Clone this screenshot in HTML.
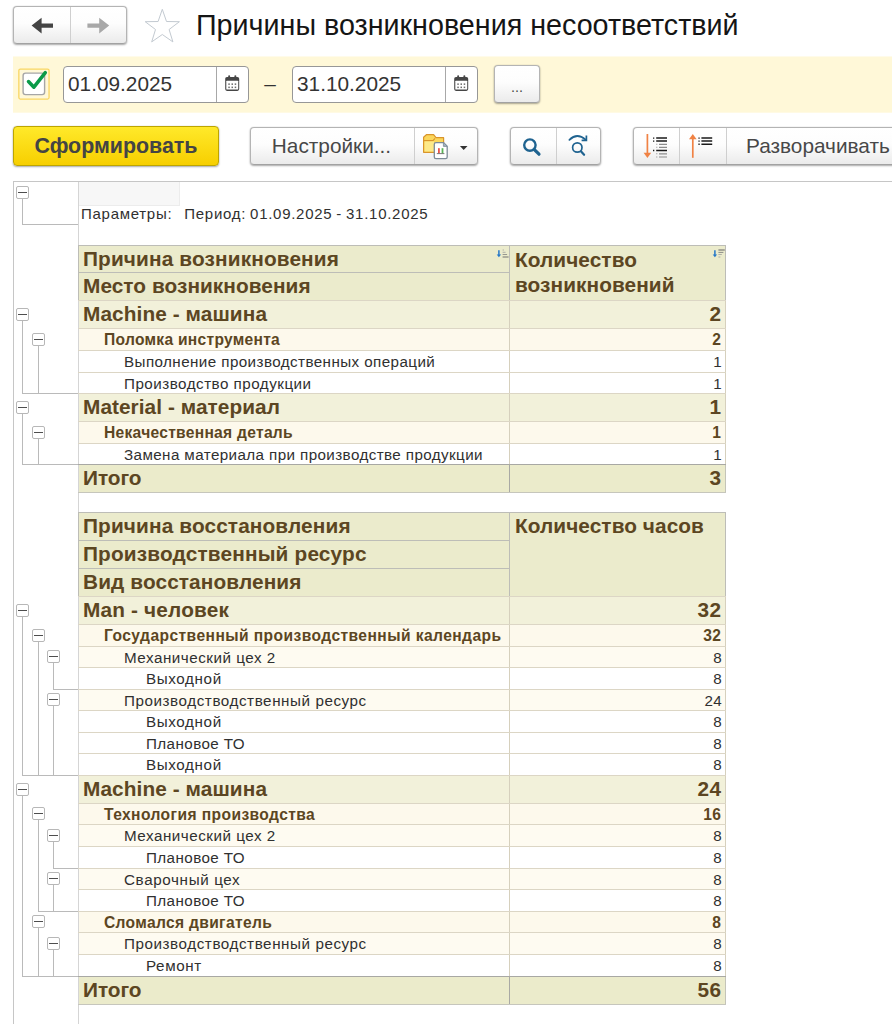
<!DOCTYPE html>
<html lang="ru"><head><meta charset="utf-8"><title>Причины возникновения несоответствий</title>
<style>
*{box-sizing:border-box;margin:0;padding:0}
html,body{width:892px;height:1024px;overflow:hidden;background:#fff;font-family:"Liberation Sans",Arial,sans-serif;color:#333}
body{position:relative}
.abs{position:absolute}
.btn{position:absolute;border:1px solid #b4b4b4;border-bottom-color:#a2a2a2;border-radius:4px;background:linear-gradient(#ffffff 0%,#fdfdfd 45%,#ebebeb 100%);box-shadow:0 1px 2px rgba(0,0,0,.32),0 0 1px rgba(0,0,0,.25);color:#484848;font-size:20.8px;text-align:center}
.inp{position:absolute;border:1px solid #979797;border-radius:4px;background:#fff;font-size:20.8px;color:#333}
.title{position:absolute;left:196px;top:7px;font-size:28.7px;line-height:36px;color:#151515;white-space:nowrap}
.band{position:absolute;left:13px;top:56px;width:879px;height:57px;background:linear-gradient(to bottom,#fffbea 0,#fffbea 1px,#fff8d8 1px,#fff8d8 56px,#fffae4 56px)}
.r{position:absolute;left:78px;width:648px;border-top:1px solid #dcd6c5;}
.r .c1{position:absolute;left:0;top:0;bottom:0;width:431px;white-space:nowrap;overflow:hidden;border-left:1px solid #d5d5d5}
.r .c2{position:absolute;left:431px;top:0;bottom:0;width:217px;text-align:right;padding-right:4px;border-left:1px solid #d6d0bd;border-right:1px solid #d6d0bd}
.g1 .c1,.g1 .c2,.tt .c1,.tt .c2{background:#f2f1da;font-weight:bold;font-size:20.8px;line-height:25.5px;color:#5c4622;letter-spacing:.3px}
.tt .c1,.tt .c2{background:#ebebcb}
.r.tt{border-top-color:#a8a8a4}
.tt .c2{border-left-color:#a9a9a4;border-right-color:#c4c4b8}
.g1 .c1,.tt .c1{padding-left:4px}
.g2 .c1,.g2 .c2{background:#fdf9ec;font-weight:bold;font-size:15.6px;line-height:22px;color:#5c4622;letter-spacing:.3px}
.g2 .c1{padding-left:25px}
.g3 .c1,.g3 .c2{background:#fefbf1;font-size:15.2px;line-height:21px;color:#303030;letter-spacing:.5px}
.g3 .c1{padding-left:45px}
.d3 .c1,.d3 .c2{background:#fff;font-size:15.2px;line-height:21px;color:#303030;letter-spacing:.5px}
.d3 .c1{padding-left:45px}
.d4 .c1,.d4 .c2{background:#fff;font-size:15.2px;line-height:21px;color:#303030;letter-spacing:.5px}
.d4 .c1{padding-left:67px}
.c2 span{margin-right:-.3px}
.g3 .c2,.d3 .c2,.d4 .c2{padding-right:3px}
.hd{position:absolute;background:#ebebcc;border:1px solid #bdbdb7;font-weight:bold;font-size:20.8px;line-height:25.5px;color:#5c4622;padding-left:4px;white-space:nowrap;letter-spacing:.3px}
.si{position:absolute;right:0px;top:3px}
.bx{position:absolute;width:13px;height:13px;border:1px solid #b7b7b7;border-radius:2px;background:#fff}
.bx:after{content:"";position:absolute;left:1px;right:1px;top:5px;height:1px;background:#4e4e4e}
.vl{position:absolute;width:1px;background:#bababa}
.hl{position:absolute;height:1px;background:#bababa}
</style></head><body>
<!-- nav -->
<div class="btn" style="left:13px;top:6px;width:114px;height:38px"></div>
<div class="abs" style="left:70px;top:7px;width:1px;height:36px;background:#cfcfcf"></div>
<svg class="abs" style="left:13px;top:6px" width="115" height="38" viewBox="0 0 115 38">
<path d="M18.6 19.6 L28.6 11.8 L28.6 17.4 L40 17.4 L40 21.8 L28.6 21.8 L28.6 27.4 Z" fill="#444"/>
<path d="M96.2 19.6 L86.2 11.8 L86.2 17.4 L74.4 17.4 L74.4 21.8 L86.2 21.8 L86.2 27.4 Z" fill="#a8a8a8"/>
</svg>
<svg class="abs" style="left:140px;top:4px" width="46" height="44" viewBox="140 4 46 44"><path d="M162.3 9.3 L166.5 21.5 L179.4 21.7 L169.1 29.5 L172.9 41.9 L162.3 34.5 L151.7 41.9 L155.5 29.5 L145.2 21.7 L158.1 21.5 Z" fill="#fff" stroke="#c3cad1" stroke-width="1"/></svg>
<div class="title">Причины возникновения несоответствий</div>
<div class="band"></div>
<!-- checkbox -->
<svg class="abs" style="left:14px;top:62px" width="42" height="42" viewBox="14 62 42 42"><rect x="18.85" y="69.05" width="30.2" height="30" rx="1.5" fill="none" stroke="#f9d662" stroke-width="1.3"/><rect x="23.1" y="73.1" width="21.5" height="21.5" rx="2.6" fill="#fff" stroke="#a6a6a6" stroke-width="1.4"/><path d="M28.5 81.5 L33.9 87.2 L45.3 72.6" fill="none" stroke="#0a9a48" stroke-width="3.5" stroke-linecap="round" stroke-linejoin="round"/></svg>
<!-- date inputs -->
<div class="inp" style="left:63px;top:66px;width:186px;height:37px"><span class="abs" style="left:4px;top:5px;line-height:24px">01.09.2025</span><span class="abs" style="left:152px;top:0;width:1px;height:35px;background:#a8a8a8"></span></div>
<svg class="abs" style="left:224px;top:74px" width="17" height="18" viewBox="0 0 17 18"><rect x="4.2" y="1.2" width="1.9" height="3.8" rx=".9" fill="#4a4a4a"/><rect x="10.4" y="1.2" width="1.9" height="3.8" rx=".9" fill="#4a4a4a"/><rect x="1.2" y="2.9" width="14" height="14" rx="1.8" fill="#464646"/><rect x="2.3" y="6.8" width="11.9" height="8.8" rx=".5" fill="#fff"/><g fill="#6a6a6a"><rect x="4.3" y="9.4" width="1.5" height="1.5"/><rect x="7.5" y="9.4" width="1.5" height="1.5"/><rect x="10.7" y="9.4" width="1.5" height="1.5"/><rect x="4.3" y="12.6" width="1.5" height="1.5"/><rect x="7.5" y="12.6" width="1.5" height="1.5"/><rect x="10.7" y="12.6" width="1.5" height="1.5"/></g></svg>
<div class="abs" style="left:259px;top:72px;font-size:20.8px;line-height:24px;width:22px;text-align:center;color:#333">–</div>
<div class="inp" style="left:292px;top:66px;width:186px;height:37px"><span class="abs" style="left:4px;top:5px;line-height:24px">31.10.2025</span><span class="abs" style="left:152px;top:0;width:1px;height:35px;background:#a8a8a8"></span></div>
<svg class="abs" style="left:453px;top:74px" width="17" height="18" viewBox="0 0 17 18"><rect x="4.2" y="1.2" width="1.9" height="3.8" rx=".9" fill="#4a4a4a"/><rect x="10.4" y="1.2" width="1.9" height="3.8" rx=".9" fill="#4a4a4a"/><rect x="1.2" y="2.9" width="14" height="14" rx="1.8" fill="#464646"/><rect x="2.3" y="6.8" width="11.9" height="8.8" rx=".5" fill="#fff"/><g fill="#6a6a6a"><rect x="4.3" y="9.4" width="1.5" height="1.5"/><rect x="7.5" y="9.4" width="1.5" height="1.5"/><rect x="10.7" y="9.4" width="1.5" height="1.5"/><rect x="4.3" y="12.6" width="1.5" height="1.5"/><rect x="7.5" y="12.6" width="1.5" height="1.5"/><rect x="10.7" y="12.6" width="1.5" height="1.5"/></g></svg>
<div class="btn" style="left:494px;top:65px;width:46px;height:38px;font-size:14.3px;line-height:42px">...</div>
<!-- toolbar -->
<div class="btn" style="left:13px;top:126px;width:206px;height:40px;background:linear-gradient(#ffe92a,#f7cf00);border-color:#bda500;font-weight:bold;line-height:38px;color:#444;font-size:21.4px">Сформировать</div>
<div class="btn" style="left:250px;top:127px;width:228px;height:38px"></div>
<div class="abs" style="left:250px;top:127px;width:163px;height:38px;font-size:20.8px;line-height:38px;text-align:center;color:#484848">Настройки...</div>
<div class="abs" style="left:414px;top:128px;width:1px;height:36px;background:#cfcfcf"></div>
<div class="btn" style="left:510px;top:127px;width:91px;height:38px"></div>
<div class="abs" style="left:556px;top:128px;width:1px;height:36px;background:#cfcfcf"></div>
<div class="btn" style="left:633px;top:127px;width:280px;height:38px"></div>
<div class="abs" style="left:679px;top:128px;width:1px;height:36px;background:#cfcfcf"></div>
<div class="abs" style="left:726px;top:128px;width:1px;height:36px;background:#cfcfcf"></div>
<div class="abs" style="left:746px;top:127px;height:38px;font-size:20.8px;line-height:38px;color:#484848;white-space:nowrap">Разворачивать</div>
<svg class="abs" style="left:414px;top:126px" width="64" height="40" viewBox="414 126 64 40">
<path d="M423.6 152.3 L423.6 137.2 L426.4 134.7 L433.6 134.7 L436 137.7 L443.6 137.7 L443.6 152.3 Z" fill="#fbd75c" stroke="#d9952b" stroke-width="1.2" stroke-linejoin="round"/>
<path d="M423.6 140.6 L433 140.6 L435 138.4" fill="none" stroke="#d9952b" stroke-width="1.1"/>
<rect x="424.6" y="141.4" width="9.5" height="10" fill="#fde98a"/>
<path d="M436 142.6 L443.6 142.6 L447.2 146.2 L447.2 157 Q447.2 158.6 445.6 158.6 L436 158.6 Q434.3 158.6 434.3 157 L434.3 144.2 Q434.3 142.6 436 142.6 Z" fill="#fff" stroke="#7d8b98" stroke-width="1.3"/>
<path d="M443.4 142.8 L443.4 146.4 L447 146.4" fill="#9fb0c0" stroke="#7d8b98" stroke-width="0.8"/>
<rect x="438" y="148.2" width="1.8" height="5.2" fill="#e8534a"/>
<rect x="441.6" y="148.2" width="1.8" height="5.2" fill="#58b455"/>
<rect x="436.8" y="153.2" width="7.6" height="0.9" fill="#6a6a6a"/>
<path d="M459.9 146 L467.5 146 L463.7 150 Z" fill="#333"/>
</svg>
<svg class="abs" style="left:510px;top:126px" width="96" height="40" viewBox="510 126 96 40" fill="none" stroke="#1f6390" stroke-linecap="round">
<circle cx="529.9" cy="145.1" r="5.7" stroke-width="2.4"/>
<path d="M534.6 149.8 L539 154.2" stroke-width="3.2"/>
<circle cx="577.3" cy="147.5" r="4.7" stroke-width="1.7"/>
<path d="M580.9 151.3 L584.1 154.8" stroke-width="2.2"/>
<path d="M569.4 139.8 Q577 132.2 585.6 139.6" stroke-width="1.8"/>
<path d="M586.4 135.6 L586.4 140.4 L581.6 140.4" stroke-width="1.7" stroke-linejoin="miter" stroke-linecap="butt"/>
</svg>
<svg class="abs" style="left:632px;top:126px" width="96" height="40" viewBox="632 126 96 40">
<path d="M647.4 134 L647.4 154" stroke="#f08244" stroke-width="1.7" fill="none"/>
<path d="M643.6 152.8 L651.2 152.8 L647.4 158 Z" fill="#f08244"/>
<g stroke="#1a1a1a" stroke-width="1.5"><path d="M656.2 138.1H667M656.2 141.1H667M656.2 150.5H667"/></g>
<g stroke="#1a1a1a" stroke-width="1.4" stroke-dasharray="1.3 30"><path d="M653 138.1H655M653 141.1H655M653 150.5H655"/></g>
<g stroke="#8c8c8c" stroke-width="1.2"><path d="M659 144.3H667M659 147.3H667M659 153.8H667M659 157H667"/></g>
<g stroke="#8c8c8c" stroke-width="1.1" stroke-dasharray="1 30"><path d="M656.3 144.3H658M656.3 147.3H658M656.3 153.8H658M656.3 157H658"/></g>
<path d="M692.8 138 L692.8 157.8" stroke="#f08244" stroke-width="1.7" fill="none"/>
<path d="M689 139.2 L696.6 139.2 L692.8 134 Z" fill="#f08244"/>
<g stroke="#1a1a1a" stroke-width="1.5"><path d="M701.4 138.1H712.2M701.4 141.1H712.2M701.4 144.3H712.2"/></g>
<g stroke="#1a1a1a" stroke-width="1.4" stroke-dasharray="1.3 30"><path d="M698.4 138.1H700M698.4 141.1H700M698.4 144.3H700"/></g>
</svg>
<!-- report frame -->
<div class="abs" style="left:13px;top:181px;width:879px;height:1px;background:#c6c6c6"></div>
<div class="abs" style="left:13px;top:181px;width:1px;height:843px;background:#c6c6c6"></div>
<div class="abs" style="left:78px;top:182px;width:1px;height:842px;background:#d5d5d5"></div>
<div class="abs" style="left:79px;top:182px;width:101px;height:24px;background:#f7f7f7;border-right:1px solid #ececec;border-bottom:1px solid #ececec"></div>
<div class="abs" style="left:81px;top:205px;font-size:15px;line-height:18px;color:#303030;white-space:pre;letter-spacing:.72px;word-spacing:-.9px">Параметры:   Период: 01.09.2025 - 31.10.2025</div>
<div class="hd" style="left:78px;top:245px;width:432px;height:28px;"><span id="s245_78" style="letter-spacing:0.14px">Причина возникновения</span><svg class="si" width="13" height="10" viewBox="0 0 13 10"><path d="M2.9 1.2v5" stroke="#2678c8" stroke-width="1.5" fill="none"/><path d="M0.7 5.4h4.4L2.9 8.2z" fill="#2678c8"/><path d="M6.6 1h1.4M6.6 3.3h3" stroke="#b0b0a8" stroke-width="1"/><path d="M6.6 5.5h4.5" stroke="#989890" stroke-width="1"/><path d="M6.6 8h6" stroke="#7c7c78" stroke-width="1.1"/></svg></div><div class="hd" style="left:78px;top:272px;width:432px;height:29px;"><span id="s272_78" style="letter-spacing:0.06px">Место возникновения</span></div><div class="hd" style="left:509px;top:245px;width:217px;height:56px;padding-left:5px;line-height:25px;padding-top:1px;letter-spacing:.08px"><span id="s245_509">Количество<br>возникновений</span><svg class="si" width="13" height="10" viewBox="0 0 13 10"><path d="M2.9 1.2v5" stroke="#2678c8" stroke-width="1.5" fill="none"/><path d="M0.7 5.4h4.4L2.9 8.2z" fill="#2678c8"/><path d="M6.4 1h6.4" stroke="#7c7c78" stroke-width="1.2"/><path d="M6.4 3.4h5" stroke="#8c8c88" stroke-width="1"/><path d="M6.4 5.5h3.4M6.4 8h2" stroke="#b0b0a8" stroke-width="1"/></svg></div><div class="hd" style="left:78px;top:512px;width:432px;height:29px;"><span id="s512_78" style="letter-spacing:0.13px">Причина восстановления</span></div><div class="hd" style="left:78px;top:540px;width:432px;height:29px;"><span id="s540_78" style="letter-spacing:0.17px">Производственный ресурс</span></div><div class="hd" style="left:78px;top:568px;width:432px;height:29px;"><span id="s568_78" style="letter-spacing:0.12px">Вид восстановления</span></div><div class="hd" style="left:509px;top:512px;width:217px;height:85px;padding-left:5px;letter-spacing:.08px"><span id="s512_509">Количество часов</span></div>
<div class="abs" style="left:78px;top:492px;width:648px;height:1px;background:#c6c6bc"></div>
<div class="abs" style="left:78px;top:1004px;width:648px;height:1px;background:#c6c6bc"></div>
<div class="r g1" style="top:300px;height:28px"><div class="c1"><span id="s300" style="letter-spacing:0.09px">Machine - машина</span></div><div class="c2"><span>2</span></div></div>
<div class="r g2" style="top:328px;height:22px"><div class="c1"><span id="s328" style="letter-spacing:0.28px">Поломка инструмента</span></div><div class="c2"><span>2</span></div></div>
<div class="r d3" style="top:350px;height:22px"><div class="c1"><span id="s350" style="letter-spacing:0.42px">Выполнение производственных операций</span></div><div class="c2"><span>1</span></div></div>
<div class="r d3" style="top:372px;height:21px"><div class="c1"><span id="s372" style="letter-spacing:0.49px">Производство продукции</span></div><div class="c2"><span>1</span></div></div>
<div class="r g1" style="top:393px;height:28px"><div class="c1"><span id="s393" style="letter-spacing:0.06px">Material - материал</span></div><div class="c2"><span>1</span></div></div>
<div class="r g2" style="top:421px;height:22px"><div class="c1"><span id="s421" style="letter-spacing:0.28px">Некачественная деталь</span></div><div class="c2"><span>1</span></div></div>
<div class="r d3" style="top:443px;height:21px"><div class="c1"><span id="s443" style="letter-spacing:0.4px">Замена материала при производстве продукции</span></div><div class="c2"><span>1</span></div></div>
<div class="r tt" style="top:464px;height:28px"><div class="c1"><span id="s464" style="letter-spacing:-0.06px">Итого</span></div><div class="c2"><span>3</span></div></div>
<div class="r g1" style="top:596px;height:28px"><div class="c1"><span id="s596" style="letter-spacing:0.17px">Man - человек</span></div><div class="c2"><span>32</span></div></div>
<div class="r g2" style="top:624px;height:22px"><div class="c1"><span id="s624" style="letter-spacing:0.43px">Государственный производственный календарь</span></div><div class="c2"><span>32</span></div></div>
<div class="r g3" style="top:646px;height:21px"><div class="c1"><span id="s646" style="letter-spacing:0.52px">Механический цех 2</span></div><div class="c2"><span>8</span></div></div>
<div class="r d4" style="top:667px;height:22px"><div class="c1"><span id="s667" style="letter-spacing:0.63px">Выходной</span></div><div class="c2"><span>8</span></div></div>
<div class="r g3" style="top:689px;height:21px"><div class="c1"><span id="s689" style="letter-spacing:0.57px">Производстводственный ресурс</span></div><div class="c2"><span>24</span></div></div>
<div class="r d4" style="top:710px;height:22px"><div class="c1"><span id="s710" style="letter-spacing:0.63px">Выходной</span></div><div class="c2"><span>8</span></div></div>
<div class="r d4" style="top:732px;height:21px"><div class="c1"><span id="s732" style="letter-spacing:0.42px">Плановое ТО</span></div><div class="c2"><span>8</span></div></div>
<div class="r d4" style="top:753px;height:22px"><div class="c1"><span id="s753" style="letter-spacing:0.63px">Выходной</span></div><div class="c2"><span>8</span></div></div>
<div class="r g1" style="top:775px;height:28px"><div class="c1"><span id="s775" style="letter-spacing:0.09px">Machine - машина</span></div><div class="c2"><span>24</span></div></div>
<div class="r g2" style="top:803px;height:21px"><div class="c1"><span id="s803" style="letter-spacing:0.41px">Технология производства</span></div><div class="c2"><span>16</span></div></div>
<div class="r g3" style="top:824px;height:22px"><div class="c1"><span id="s824" style="letter-spacing:0.52px">Механический цех 2</span></div><div class="c2"><span>8</span></div></div>
<div class="r d4" style="top:846px;height:22px"><div class="c1"><span id="s846" style="letter-spacing:0.42px">Плановое ТО</span></div><div class="c2"><span>8</span></div></div>
<div class="r g3" style="top:868px;height:21px"><div class="c1"><span id="s868" style="letter-spacing:0.64px">Сварочный цех</span></div><div class="c2"><span>8</span></div></div>
<div class="r d4" style="top:889px;height:22px"><div class="c1"><span id="s889" style="letter-spacing:0.42px">Плановое ТО</span></div><div class="c2"><span>8</span></div></div>
<div class="r g2" style="top:911px;height:21px"><div class="c1"><span id="s911" style="letter-spacing:0.33px">Сломался двигатель</span></div><div class="c2"><span>8</span></div></div>
<div class="r g3" style="top:932px;height:22px"><div class="c1"><span id="s932" style="letter-spacing:0.57px">Производстводственный ресурс</span></div><div class="c2"><span>8</span></div></div>
<div class="r d4" style="top:954px;height:22px"><div class="c1"><span id="s954" style="letter-spacing:0.61px">Ремонт</span></div><div class="c2"><span>8</span></div></div>
<div class="r tt" style="top:976px;height:28px"><div class="c1"><span id="s976" style="letter-spacing:-0.06px">Итого</span></div><div class="c2"><span>56</span></div></div>
<div class="bx" style="left:16px;top:308px"></div>
<div class="vl" style="left:22px;top:321px;height:72px"></div>
<div class="hl" style="left:22px;top:393px;width:56px"></div>
<div class="bx" style="left:32px;top:333px"></div>
<div class="vl" style="left:38px;top:346px;height:47px"></div>
<div class="hl" style="left:38px;top:393px;width:40px"></div>
<div class="bx" style="left:16px;top:401px"></div>
<div class="vl" style="left:22px;top:414px;height:50px"></div>
<div class="hl" style="left:22px;top:464px;width:56px"></div>
<div class="bx" style="left:32px;top:426px"></div>
<div class="vl" style="left:38px;top:439px;height:25px"></div>
<div class="hl" style="left:38px;top:464px;width:40px"></div>
<div class="bx" style="left:16px;top:604px"></div>
<div class="vl" style="left:22px;top:617px;height:158px"></div>
<div class="hl" style="left:22px;top:775px;width:56px"></div>
<div class="bx" style="left:32px;top:629px"></div>
<div class="vl" style="left:38px;top:642px;height:133px"></div>
<div class="hl" style="left:38px;top:775px;width:40px"></div>
<div class="bx" style="left:47px;top:650px"></div>
<div class="vl" style="left:53px;top:663px;height:26px"></div>
<div class="hl" style="left:53px;top:689px;width:25px"></div>
<div class="bx" style="left:47px;top:693px"></div>
<div class="vl" style="left:53px;top:706px;height:69px"></div>
<div class="hl" style="left:53px;top:775px;width:25px"></div>
<div class="bx" style="left:16px;top:783px"></div>
<div class="vl" style="left:22px;top:796px;height:180px"></div>
<div class="hl" style="left:22px;top:976px;width:56px"></div>
<div class="bx" style="left:32px;top:807px"></div>
<div class="vl" style="left:38px;top:820px;height:91px"></div>
<div class="hl" style="left:38px;top:911px;width:40px"></div>
<div class="bx" style="left:47px;top:829px"></div>
<div class="vl" style="left:53px;top:842px;height:26px"></div>
<div class="hl" style="left:53px;top:868px;width:25px"></div>
<div class="bx" style="left:47px;top:872px"></div>
<div class="vl" style="left:53px;top:885px;height:26px"></div>
<div class="hl" style="left:53px;top:911px;width:25px"></div>
<div class="bx" style="left:32px;top:915px"></div>
<div class="vl" style="left:38px;top:928px;height:48px"></div>
<div class="hl" style="left:38px;top:976px;width:40px"></div>
<div class="bx" style="left:47px;top:937px"></div>
<div class="vl" style="left:53px;top:950px;height:26px"></div>
<div class="hl" style="left:53px;top:976px;width:25px"></div>
<div class="bx" style="left:16px;top:186px"></div>
<div class="vl" style="left:22px;top:198px;height:26px"></div>
<div class="hl" style="left:22px;top:224px;width:56px"></div>
</body></html>
